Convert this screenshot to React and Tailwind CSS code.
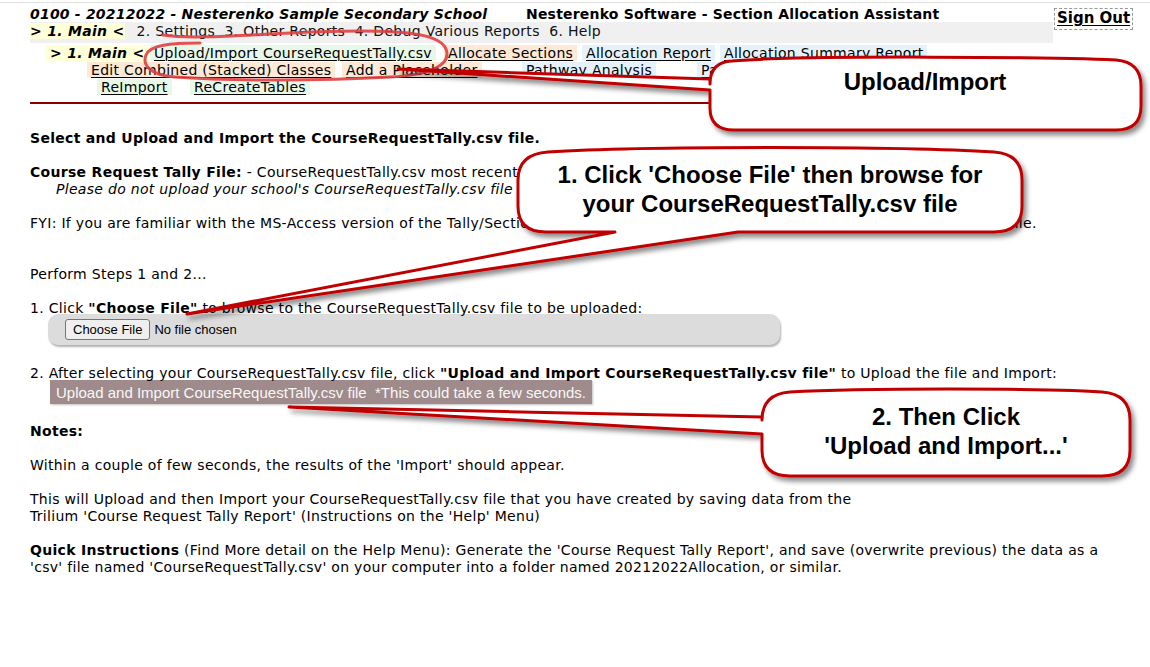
import React from 'react';

const GREEN = 'bg-[#e8f8e8]';
const ORANGE = 'bg-[#fde9d6]';
const BLUE = 'bg-[#e6f2fb]';

const MenuLink = ({ children, bg }) => (
  <span className={`${bg} px-[4px] underline underline-offset-2 decoration-1 whitespace-nowrap`}>
    {children}
  </span>
);

const Cell = ({ w, children }) => <div className={`${w} shrink-0`}>{children}</div>;

const Header = () => (
  <div className="flex pl-[30px] pt-[3px]">
    <div className="w-[1023px] shrink-0">
      {/* title line */}
      <div className="flex h-[16px] leading-[17px] text-[14px] font-bold tracking-[0.2px] whitespace-nowrap">
        <span className="w-[496px] shrink-0 italic">0100 - 20212022 - Nesterenko Sample Secondary School</span>
        <span>Nesterenko Software - Section Allocation Assistant</span>
      </div>

      {/* top menu */}
      <div className="h-[21px] bg-[#f0f0f0] pt-[2px] leading-[15px] text-[14px] tracking-[0.3px] whitespace-nowrap">
        <span className="bg-[#ffffd8] font-bold italic">{'> 1. Main <'}</span>
        <span className="ml-[12px] text-[#111]">2. Settings&nbsp; 3. Other Reports&nbsp; 4. Debug Various Reports&nbsp; 6. Help</span>
      </div>

      {/* sub menu */}
      <div className="pt-[2px]">
        <div className="flex h-[17px] leading-[17px] text-[14px] tracking-[0.3px]">
          <Cell w="w-[16px]" />
          <Cell w="w-[104px]">
            <span className="bg-[#ffffd8] px-[4px] font-bold italic whitespace-nowrap">{'> 1. Main <'}</span>
          </Cell>
          <Cell w="w-[294px]"><MenuLink bg={GREEN}>Upload/Import CourseRequestTally.csv</MenuLink></Cell>
          <Cell w="w-[138px]"><MenuLink bg={ORANGE}>Allocate Sections</MenuLink></Cell>
          <Cell w="w-[138px]"><MenuLink bg={BLUE}>Allocation Report</MenuLink></Cell>
          <Cell w="w-[220px]"><MenuLink bg={BLUE}>Allocation Summary Report</MenuLink></Cell>
        </div>
        <div className="flex h-[17px] leading-[17px] text-[14px] tracking-[0.3px]">
          <Cell w="w-[57px]" />
          <Cell w="w-[255px]"><MenuLink bg={ORANGE}>Edit Combined (Stacked) Classes</MenuLink></Cell>
          <Cell w="w-[180px]"><MenuLink bg={ORANGE}>Add a Placeholder</MenuLink></Cell>
          <Cell w="w-[175px]"><MenuLink bg={BLUE}>Pathway Analysis</MenuLink></Cell>
          <Cell w="w-[200px]"><MenuLink bg={BLUE}>Pathway Report</MenuLink></Cell>
        </div>
        <div className="flex h-[17px] leading-[17px] text-[14px] tracking-[0.3px]">
          <Cell w="w-[67px]" />
          <Cell w="w-[93px]"><MenuLink bg={GREEN}>ReImport</MenuLink></Cell>
          <Cell w="w-[150px]"><MenuLink bg={GREEN}>ReCreateTables</MenuLink></Cell>
        </div>
      </div>
    </div>

    <div className="ml-[1px] mt-[2px] h-[22px] border border-dashed border-[#999] px-[2px] leading-[19px] text-[15px] font-bold underline underline-offset-2 whitespace-nowrap">
      Sign Out
    </div>
  </div>
);

const Blank = () => <div className="h-[17px]" />;

const Body = () => (
  <div className="pl-[30px] mt-[26px] text-[14px] leading-[17px] tracking-[0.3px] whitespace-nowrap">
    <div className="font-bold">Select and Upload and Import the CourseRequestTally.csv file.</div>
    <Blank />
    <div>
      <b>Course Request Tally File:</b> - CourseRequestTally.csv most recent version exported from Trillium.
    </div>
    <div className="pl-[26px] italic">
      Please do not upload your school's CourseRequestTally.csv file with real student data.
    </div>
    <Blank />
    <div>
      FYI: If you are familiar with the MS-Access version of the Tally/Section Allocation Assistants, this uses the same Course Requests Tally file.
    </div>
    <Blank />
    <Blank />
    <div>Perform Steps 1 and 2...</div>
    <Blank />
    <div>
      1. Click <b>"Choose File"</b> to browse to the CourseRequestTally.csv file to be uploaded:
    </div>

    <div className="ml-[18px] -mt-[3px] flex h-[31px] w-[732px] items-center rounded-[10px] bg-[#dcdcdc] pl-[17px] tracking-normal shadow-[1px_2px_2px_rgba(0,0,0,0.3)] font-['Liberation_Sans',Arial,sans-serif]">
      <button className="h-[21px] rounded-[3px] border border-[#767676] bg-[#efefef] px-[7px] text-[13px] leading-[19px] text-black">
        Choose File
      </button>
      <span className="ml-[4px] text-[13px]">No file chosen</span>
    </div>

    <div className="h-[20px]" />
    <div>
      2. After selecting your CourseRequestTally.csv file, click <b>"Upload and Import CourseRequestTally.csv file"</b> to Upload the file and Import:
    </div>
    <div className="ml-[20px] -mt-[2px] flex h-[24px] w-fit items-center bg-[#9f8b8b] px-[6px] font-['Liberation_Sans',Arial,sans-serif] text-[15px] tracking-normal text-[#f8f8f8] shadow-[1px_1px_2px_rgba(0,0,0,0.25)]">
      Upload and Import CourseRequestTally.csv file&nbsp; *This could take a few seconds.
    </div>
    <div className="h-[19px]" />
    <div className="font-bold">Notes:</div>
    <Blank />
    <div>Within a couple of few seconds, the results of the 'Import' should appear.</div>
    <Blank />
    <div>
      This will Upload and then Import your CourseRequestTally.csv file that you have created by saving data from the
      <br />
      Trilium 'Course Request Tally Report' (Instructions on the 'Help' Menu)
    </div>
    <Blank />
    <div>
      <b>Quick Instructions</b> (Find More detail on the Help Menu): Generate the 'Course Request Tally Report', and save (overwrite previous) the data as a
      <br />
      'csv' file named 'CourseRequestTally.csv' on your computer into a folder named 20212022Allocation, or similar.
    </div>
  </div>
);

// red annotation callouts drawn over the page
const Callouts = () => (
  <div className="pointer-events-none absolute inset-0">
    <svg width="1150" height="667" className="absolute left-0 top-0">
      <defs>
        <filter id="sh" x="-10%" y="-20%" width="130%" height="150%">
          <feDropShadow dx="3" dy="4" stdDeviation="2.5" floodColor="#000" floodOpacity="0.45" />
        </filter>
      </defs>

      {/* hand drawn loop around the upload link */}
      <path
        d="M 163 35 C 200 41, 280 31, 360 31 C 410 31, 440 35, 446 49 C 452 65, 430 75, 390 77 C 320 81, 230 81, 175 77 C 150 75, 142 65, 146 55 C 150 45, 170 43, 200 43"
        fill="none"
        stroke="#e04040"
        strokeWidth="3"
        strokeLinecap="round"
        opacity="0.9"
      />

      <g filter="url(#sh)" fill="#fff" stroke="#c00000" strokeWidth="3" strokeLinejoin="round">
        <path d="M 732 61 C 800 55, 1060 57, 1116 60 Q 1141 62 1141 86 V 106 Q 1141 130 1116 130 H 734 Q 710 130 710 108 V 90 L 398 69 L 710 79 V 84 Q 710 62 732 61 Z" />
        <path d="M 548 152 C 640 146, 900 146, 994 152 Q 1022 154 1022 180 V 206 Q 1022 232 994 232 H 738 L 187 314 L 615 232 H 546 Q 518 232 518 206 V 180 Q 518 154 548 152 Z" />
        <path d="M 790 392 C 860 388, 1040 388, 1102 392 Q 1130 394 1130 420 V 450 Q 1130 476 1102 476 H 790 Q 762 476 762 450 V 434 L 289 407 L 762 417 V 420 Q 762 394 790 392 Z" />
      </g>
    </svg>

    <div className="absolute left-[710px] top-[68px] w-[430px] text-center font-['Liberation_Sans',Arial,sans-serif] text-[24px] leading-[28px] font-bold text-black">
      Upload/Import
    </div>
    <div className="absolute left-[518px] top-[160px] w-[504px] text-center font-['Liberation_Sans',Arial,sans-serif] text-[24px] leading-[29px] font-bold text-black">
      1. Click 'Choose File' then browse for
      <br />
      your CourseRequestTally.csv file
    </div>
    <div className="absolute left-[762px] top-[402px] w-[368px] text-center font-['Liberation_Sans',Arial,sans-serif] text-[24px] leading-[29px] font-bold text-black">
      2. Then Click
      <br />
      'Upload and Import...'
    </div>
  </div>
);

export default function App() {
  return (
    <div className="relative h-[667px] w-[1150px] overflow-hidden bg-white text-black font-['DejaVu_Sans',Verdana,sans-serif]">
      <div className="mt-[2px] h-px bg-[#e2e2e2]" />
      <Header />
      <div className="ml-[30px] mt-[6px] h-[2px] w-[1098px] bg-[#8b0000]" />
      <Body />
      <Callouts />
    </div>
  );
}
